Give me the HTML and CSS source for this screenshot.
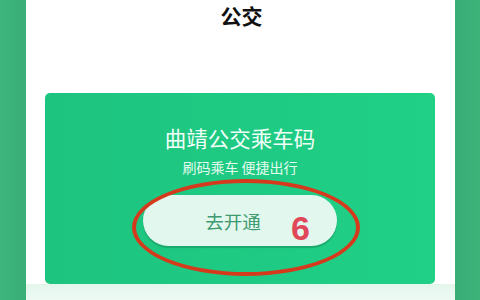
FILE: index.html
```html
<!DOCTYPE html>
<html lang="zh">
<head>
<meta charset="utf-8">
<link rel="stylesheet" href="styles.css">
</head>
<body>
<div class="screen">
  <div class="side side-left"></div>
  <div class="panel">
    <div class="title">公交</div>
    <div class="card">
      <div class="card-title">曲靖公交乘车码</div>
      <div class="card-sub">刷码乘车 便捷出行</div>
      <div class="btn">去开通</div>
      <div class="ring"></div>
      <div class="mark">6</div>
    </div>
    <div class="below"></div>
  </div>
  <div class="side side-right"></div>
</div>
</body>
</html>
```

FILE: styles.css
```css
html, body {
  margin: 0;
  padding: 0;
  width: 480px;
  height: 300px;
  overflow: hidden;
  background: #ffffff;
  font-family: "Noto Sans CJK SC", "Noto Sans", sans-serif;
}
.screen {
  display: flex;
  width: 480px;
  height: 300px;
}
.side {
  flex: none;
  height: 100%;
  background: linear-gradient(90deg, #3cb57b, #3aae77);
}
.side-left { width: 26px; }
.side-right { width: 25px; background: linear-gradient(90deg, #38ad76, #3db37a); }
.panel {
  flex: 1;
  display: flex;
  flex-direction: column;
  background: #ffffff;
}
.title {
  height: 30px;
  line-height: 30px;
  font-size: 21px;
  font-weight: 700;
  color: #111111;
  text-align: center;
  padding-left: 2px;
}
.card {
  position: relative;
  margin: 63px 20px 0 19px;
  height: 191px;
  border-radius: 5px;
  background: linear-gradient(90deg, #1dc47f, #20d087);
  display: flex;
  flex-direction: column;
  align-items: center;
  padding-top: 30px;
  box-sizing: border-box;
}
.card-title {
  font-size: 21.5px;
  line-height: 30px;
  color: #f2fff8;
}
.card-sub {
  margin-top: 4px;
  font-size: 14px;
  line-height: 20px;
  color: #e4fbef;
}
.btn {
  margin-top: 18px;
  width: 194px;
  height: 51px;
  border-radius: 26px;
  background: #e2f8ee;
  box-shadow: 0 2px 1px #1aa86c;
  display: flex;
  align-items: center;
  justify-content: center;
  font-size: 18.5px;
  color: #3f9a71;
  padding-right: 14px;
  box-sizing: border-box;
}
.ring {
  position: absolute;
  left: 87px;
  top: 86px;
  width: 228px;
  height: 97px;
  border: 4px solid #d63a1c;
  border-radius: 50%;
  box-sizing: border-box;
}
.mark {
  position: absolute;
  left: 246px;
  top: 118px;
  font-family: "Liberation Sans", Arial, sans-serif;
  font-weight: 700;
  font-size: 34px;
  line-height: 34px;
  color: #e0485a;
}
.below {
  flex: 1;
  background: linear-gradient(180deg, #e4f6ec, #eefaf4);
}
```
